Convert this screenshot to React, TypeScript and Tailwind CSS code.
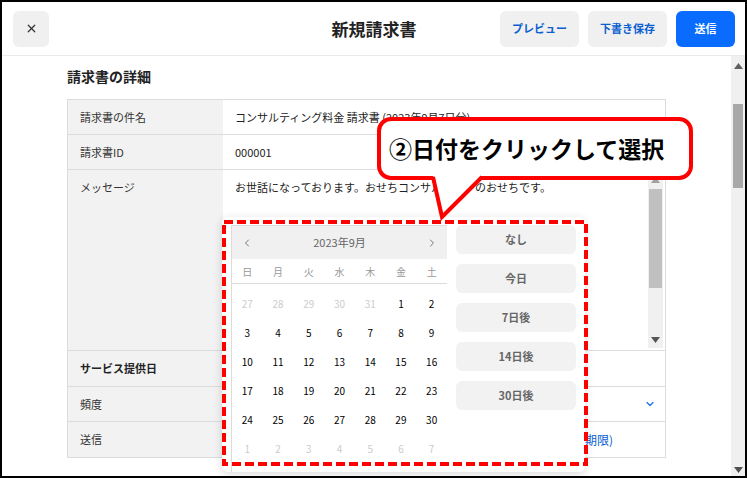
import React from 'react';
import { X, ChevronLeft, ChevronRight, ChevronDown } from 'lucide-react';

const weeks = [
    [27, 28, 29, 30, 31, 1, 2],
    [3, 4, 5, 6, 7, 8, 9],
    [10, 11, 12, 13, 14, 15, 16],
    [17, 18, 19, 20, 21, 22, 23],
    [24, 25, 26, 27, 28, 29, 30],
    [1, 2, 3, 4, 5, 6, 7],
];

const weekdays = ['日', '月', '火', '水', '木', '金', '土'];
const quickPicks = ['なし', '今日', '7日後', '14日後', '30日後'];

// first row: 5 days of August, last row: October
const isMuted = (row: number, col: number) => (row === 0 && col < 5) || row === 5;

const Arrow = ({ up, color }: { up?: boolean; color: string }) => (
    <svg width="9" height="6" viewBox="0 0 9 6" className="mx-auto">
        <polygon points={up ? '0,6 9,6 4.5,0' : '0,0 9,0 4.5,6'} fill={color} />
    </svg>
);

const Calendar = () => (
    <div className="w-[216px] border-l border-t border-[#dcdcdc]">
        <div className="h-[33px] bg-[#f0f0f0] flex items-center justify-between px-[9px] text-[#777]">
            <ChevronLeft size={12} strokeWidth={2} />
            <span className="text-[11px] text-[#666]">2023年9月</span>
            <ChevronRight size={12} strokeWidth={2} />
        </div>
        <div className="h-[25px] grid grid-cols-7 items-center border-b border-[#dcdcdc] text-[10px] text-[#999]">
            {weekdays.map((d) => (
                <span key={d} className="text-center">{d}</span>
            ))}
        </div>
        <div className="pt-[5px] pb-[9px]">
            {weeks.map((week, r) => (
                <div key={r} className="grid grid-cols-7 h-[29px] items-center text-[10px]">
                    {week.map((day, c) => (
                        <span key={c} className={`text-center ${isMuted(r, c) ? 'text-[#cccccc]' : 'text-black'}`}>
                            {day}
                        </span>
                    ))}
                </div>
            ))}
        </div>
    </div>
);

const App = () => {
    return (
        <div className="relative w-[747px] h-[478px] border-2 border-black bg-white overflow-hidden flex flex-col font-['Noto_Sans_CJK_JP','Noto_Sans',sans-serif] text-[#333]">
            <header className="grid grid-cols-[1fr_auto_1fr] items-center h-[54px] border-b border-[#ebebeb] pl-[11px] pr-[10px]">
                <button className="w-9 h-9 rounded-md bg-[#f0f0f0] flex items-center justify-center text-[#333]">
                    <X size={13} strokeWidth={2.2} />
                </button>
                <h1 className="text-[17px] font-bold text-[#222]">新規請求書</h1>
                <div className="flex justify-end gap-[9px]">
                    <button className="w-[79px] h-9 rounded-md bg-[#f0f0f0] text-[11px] font-bold text-[#0b5fd1]">プレビュー</button>
                    <button className="w-[79px] h-9 rounded-md bg-[#f0f0f0] text-[11px] font-bold text-[#0b5fd1]">下書き保存</button>
                    <button className="w-[59px] h-9 rounded-md bg-[#0a6cff] text-[11px] font-bold text-white">送信</button>
                </div>
            </header>

            <div className="flex flex-1 min-h-0">
                <main className="flex-1 px-[65px]">
                    <h2 className="mt-[10px] mb-[13px] text-[14px] leading-[20px] font-bold text-[#222]">請求書の詳細</h2>
                    <div className="border-x border-t border-[#dcdcdc] text-[11px]">
                        <div className="flex h-[35px] border-b border-[#dcdcdc]">
                            <div className="w-[155px] bg-[#f2f2f2] px-3 flex items-center">請求書の件名</div>
                            <div className="flex-1 px-3 flex items-center text-[#222] whitespace-nowrap">コンサルティング料金 請求書 (2023年9月7日分)</div>
                        </div>
                        <div className="flex h-[35px] border-b border-[#dcdcdc]">
                            <div className="w-[155px] bg-[#f2f2f2] px-3 flex items-center">請求書ID</div>
                            <div className="flex-1 px-3 flex items-center text-[#222]">000001</div>
                        </div>
                        <div className="flex h-[181px] border-b border-[#dcdcdc]">
                            <div className="w-[155px] bg-[#f2f2f2] px-3 pt-[9px] leading-[16px]">メッセージ</div>
                            <div className="flex-1 flex">
                                <p className="flex-1 pl-3 pt-[8px] leading-[18px] text-[#222] whitespace-pre-line">
                                    {'お世話になっております。おせちコンサルタントのおせちです。\n\n今月分のご請求書をお送りいたします。'}
                                </p>
                                <div className="w-[15px] my-[2px] mr-[2px] bg-[#f0f0f0] flex flex-col py-[5px]">
                                    <Arrow up color="#a0a0a0" />
                                    <div className="mx-[1px] mt-[6px] h-[99px] bg-[#c0c0c0]" />
                                    <div className="flex-1" />
                                    <Arrow color="#555" />
                                </div>
                            </div>
                        </div>
                        <div className="flex h-[36px] border-b border-[#dcdcdc]">
                            <div className="w-[155px] bg-[#f2f2f2] px-3 flex items-center font-bold text-[#222]">サービス提供日</div>
                            <div className="flex-1 px-3 flex items-center" />
                        </div>
                        <div className="flex h-[35px] border-b border-[#dcdcdc]">
                            <div className="w-[155px] bg-[#f2f2f2] px-3 flex items-center">頻度</div>
                            <div className="flex-1 pr-[9px] flex items-center justify-end text-[#1a73e8]">
                                <ChevronDown size={12} strokeWidth={2.5} />
                            </div>
                        </div>
                        <div className="flex h-[36px] border-b border-[#dcdcdc]">
                            <div className="w-[155px] bg-[#f2f2f2] px-3 flex items-center">送信</div>
                            <div className="flex-1 pr-[52px] flex items-center justify-end text-[12px] text-[#0b5fd1] whitespace-nowrap">
                                メールで自動送信する (送信日：支払期限)
                            </div>
                        </div>
                    </div>
                </main>

                <div className="w-[14px] bg-[#f0f0f0] flex flex-col pt-[7px] pb-[3px]">
                    <Arrow up color="#606060" />
                    <div className="mx-[2px] mt-[35px] h-[84px] bg-[#a8a8a8]" />
                    <div className="flex-1" />
                    <Arrow color="#505050" />
                </div>
            </div>

            {/* date picker popover */}
            <div className="absolute left-[220px] top-[215px] w-[363px] h-[255px] bg-white rounded-md shadow-[0_2px_10px_rgba(0,0,0,0.15)] flex gap-[9px] pl-[9px] pt-[8px]">
                <Calendar />
                <div className="w-[120px] flex flex-col gap-[10px]">
                    {quickPicks.map((label) => (
                        <button key={label} className="h-[29px] rounded-md bg-[#f2f2f2] text-[11px] font-bold text-[#666]">
                            {label}
                        </button>
                    ))}
                </div>
            </div>

            {/* annotation: dashed frame */}
            <svg className="absolute left-[220px] top-[218px] pointer-events-none" width="366" height="246">
                <rect x="2" y="2" width="362" height="242" fill="none" stroke="#ff0000" strokeWidth="4" strokeDasharray="9 4" />
            </svg>

            {/* annotation: callout */}
            <div className="absolute left-[375px] top-[115px] w-[316px] h-[63px] border-4 border-[#ff0000] rounded-[14px] bg-white flex items-center pl-[8px] text-[23px] font-bold text-black whitespace-nowrap">
                ②日付をクリックして選択
            </div>
            <svg className="absolute left-0 top-0 pointer-events-none" width="745" height="476">
                <polygon points="431,173 440,215 480,173" fill="#ffffff" />
                <polyline points="431,175 440,215 480,175" fill="none" stroke="#ff0000" strokeWidth="4" strokeLinejoin="miter" />
            </svg>
        </div>
    );
};

export default App;
